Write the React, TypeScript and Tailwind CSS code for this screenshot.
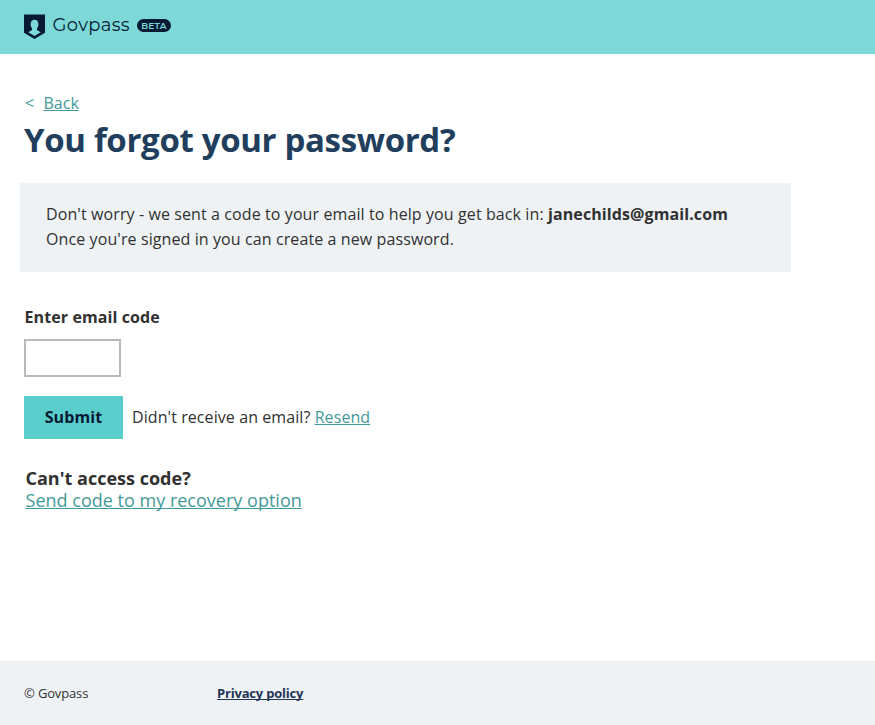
function Logo() {
  return (
    <div className="flex items-start">
      <svg className="mt-3.5 h-[25px] w-[21px]" viewBox="0 0 21 25" aria-hidden="true">
        <path d="M0 0.5H21V18.7L10.5 25L0 18.7Z" fill="#071a33" />
        <path
          d="M10.5 5.800C8 5.800 6.500 7.600 6.600 10.300c.1 1.900.6 3.200 1.400 4.100v1.500L4.300 18.200l6.200 3.900 6.200-3.900-3.700-2.300v-1.500c.8-.9 1.300-2.200 1.400-4.100.1-2.700-1.400-4.500-3.900-4.500Z"
          fill="#7dd9d8"
        />
      </svg>
      <span className="ml-[7.5px] mt-[13px] w-[84.5px] whitespace-nowrap font-['Montserrat','Lato',sans-serif] text-[18px] leading-6 tracking-[0.35px] text-[#071a33]">
        Govpass
      </span>
      <span className="mt-[19px] flex h-[13px] w-[34px] items-center justify-center rounded-full bg-[#071a33] font-['Montserrat','Lato',sans-serif] text-[9px] leading-none font-semibold tracking-[0.2px] text-[#7dd9d8]">
        BETA
      </span>
    </div>
  );
}

const link = "text-[#439a98] underline decoration-1 underline-offset-1 [text-decoration-skip-ink:none]";

export default function App() {
  return (
    <div className="flex h-[725px] w-[875px] flex-col overflow-hidden bg-white font-['Open_Sans',sans-serif] text-base text-[#313131]">
      <header className="h-[54px] shrink-0 bg-[#7dd9d8] pl-6">
        <Logo />
      </header>

      <main className="flex flex-1 flex-col items-start whitespace-nowrap pl-6">
        <nav className="mt-[37px] flex h-6 leading-6">
          <span className="w-[19.5px] pl-px text-[#439a98]">&lt;</span>
          <a href="#" className={link}>Back</a>
        </nav>
        <h1 className="mt-0.5 h-[46px] text-[33px] leading-[46px] font-bold tracking-[-0.34px] text-[#213e5d]">
          You forgot your password?
        </h1>

        <section className="-ml-1 mt-5 h-[89px] w-[771px] bg-[#eef2f5] pt-[19px] pl-[26px] leading-[25px] tracking-[0.1px]">
          <p>
            Don't worry - we sent a code to your email to help you get back in:{" "}
            <strong className="font-bold">janechilds@gmail.com</strong>
          </p>
          <p>Once you're signed in you can create a new password.</p>
        </section>

        <form className="mt-[33px]" onSubmit={(e) => e.preventDefault()}>
          <label htmlFor="code" className="block h-6 pl-[0.5px] leading-6 font-bold tracking-[0.1px]">Enter email code</label>
          <input id="code" className="mt-2.5 block h-[38px] w-[97px] border-2 border-[#b8b8b8] bg-white px-2 outline-none" />
          <div className="mt-[19px] flex h-[43px] items-center">
            <button className="h-[43px] w-[99px] bg-[#59cecd] pb-0.5 font-bold tracking-[0.1px] text-[#071a33]">Submit</button>
            <p className="ml-[9px] pb-0.5 tracking-[0.08px]">
              Didn't receive an email? <a href="#" className={link}>Resend</a>
            </p>
          </div>
        </form>

        <section className="mt-7 pl-[1.5px] text-lg leading-[22px] tracking-[0.01px]">
          <h2 className="font-bold">Can't access code?</h2>
          <a href="#" className={link}>Send code to my recovery option</a>
        </section>
      </main>

      <footer className="flex h-16 shrink-0 items-center bg-[#eef2f5] pt-0.5 pl-6 text-[13px]">
        <span className="w-[193px] tracking-[-0.15px]">© Govpass</span>
        <a href="#" className="font-bold tracking-[-0.2px] text-[#243455] underline decoration-1 underline-offset-1 [text-decoration-skip-ink:none]">Privacy policy</a>
      </footer>
    </div>
  );
}
